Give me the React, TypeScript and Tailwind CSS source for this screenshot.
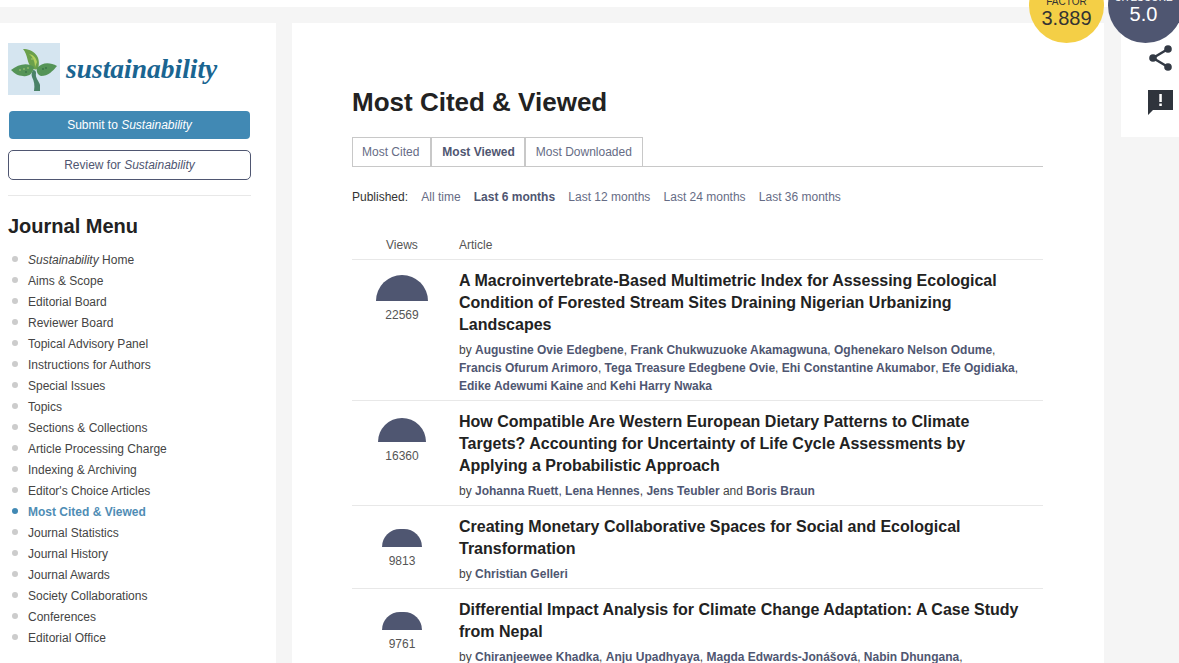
import React from 'react';

const font = "font-['Liberation_Sans',Arial,sans-serif]";

const menu = [
  'Aims & Scope',
  'Editorial Board',
  'Reviewer Board',
  'Topical Advisory Panel',
  'Instructions for Authors',
  'Special Issues',
  'Topics',
  'Sections & Collections',
  'Article Processing Charge',
  'Indexing & Archiving',
  "Editor's Choice Articles",
  'Most Cited & Viewed',
  'Journal Statistics',
  'Journal History',
  'Journal Awards',
  'Society Collaborations',
  'Conferences',
  'Editorial Office',
];

const articles = [
  {
    views: '22569',
    dome: 'w-[52px] h-[26px] mt-[15px]',
    row: 'h-[141px]',
    title: 'A Macroinvertebrate-Based Multimetric Index for Assessing Ecological Condition of Forested Stream Sites Draining Nigerian Urbanizing Landscapes',
    authors: ['Augustine Ovie Edegbene', 'Frank Chukwuzuoke Akamagwuna', 'Oghenekaro Nelson Odume', 'Francis Ofurum Arimoro', 'Tega Treasure Edegbene Ovie', 'Ehi Constantine Akumabor', 'Efe Ogidiaka', 'Edike Adewumi Kaine', 'Kehi Harry Nwaka'],
  },
  {
    views: '16360',
    dome: 'w-[48px] h-[24px] mt-[17px]',
    row: 'h-[105px]',
    title: 'How Compatible Are Western European Dietary Patterns to Climate Targets? Accounting for Uncertainty of Life Cycle Assessments by Applying a Probabilistic Approach',
    authors: ['Johanna Ruett', 'Lena Hennes', 'Jens Teubler', 'Boris Braun'],
  },
  {
    views: '9813',
    dome: 'w-[40px] h-[18px] mt-[23px]',
    row: 'h-[83px]',
    title: 'Creating Monetary Collaborative Spaces for Social and Ecological Transformation',
    authors: ['Christian Gelleri'],
  },
  {
    views: '9761',
    dome: 'w-[40px] h-[18px] mt-[23px]',
    row: 'h-[83px]',
    title: 'Differential Impact Analysis for Climate Change Adaptation: A Case Study from Nepal',
    authors: ['Chiranjeewee Khadka', 'Anju Upadhyaya', 'Magda Edwards-Jonášová', 'Nabin Dhungana'],
    more: true,
  },
];

function Logo() {
  return (
    <svg width="52" height="52" viewBox="0 0 52 52" className="shrink-0">
      <rect width="52" height="52" fill="#d5e5f0" />
      {/* stem */}
      <path d="M25 27 C27 27 28 28 28 30 C27 35 31 38 32 42 L32 48 L26 48 C27 42 26 38 24 34 C23 31 24 29 25 27Z" fill="#4a8268" />
      {/* leaves */}
      <path d="M15 6 C25 6 34 13 30 26 C27 27 24 26 23 24 C19 20 20 12 15 6Z" fill="#6ba04c" />
      <path d="M21 11 C25 14 27 19 27 24 L29 19 C28 15 26 12 21 11Z" fill="#b3cf5f" />
      <path d="M3 27 C10 21 20 19 26 24 C25 31 20 34 15 33 C10 33 6 30 3 27Z" fill="#559457" />
      <path d="M49 23 C42 19 34 19 29 25 C28 29 30 32 33 33 C40 33 45 28 49 23Z" fill="#559457" />
      <g fill="#c5dc7a">
        <circle cx="12" cy="27" r="0.7" />
        <circle cx="16" cy="26" r="0.7" />
        <circle cx="20" cy="25" r="0.7" />
        <circle cx="24" cy="16" r="0.7" />
      </g>
      <g fill="#22543a">
        <circle cx="35" cy="26" r="0.7" />
        <circle cx="38" cy="25" r="0.7" />
        <circle cx="18" cy="29" r="0.7" />
      </g>
    </svg>
  );
}

function Sidebar() {
  return (
    <aside className="w-[276px] shrink-0 bg-white pl-2 pt-5 h-[640px]">
      <div className="flex items-center">
        <Logo />
        <span className="ml-[6px] font-['Liberation_Serif',serif] text-[27.5px] font-bold italic leading-none text-[#1a6591]">sustainability</span>
      </div>
      <div className="ml-px mt-4 flex h-[28px] w-[241px] items-center justify-center rounded-[4px] bg-[#4189b4] text-xs text-white">
        Submit to&nbsp;<em>Sustainability</em>
      </div>
      <div className="mt-[11px] flex h-[30px] w-[243px] items-center justify-center rounded-[5px] border border-[#4f5671] text-xs text-[#4f5671]">
        Review for&nbsp;<em>Sustainability</em>
      </div>
      <div className="mt-[15px] h-px w-[243px] bg-[#e8e8e8]" />
      <h2 className="mt-[18px] text-xl leading-[24px] font-bold text-[#222]">Journal Menu</h2>
      <ul className="mt-[12px] text-xs text-[#444]">
        <li className="relative h-[21px] pl-5 leading-[21px]">
          <span className="absolute left-[4px] top-[6px] size-[6px] rounded-full bg-[#cccccc]" />
          <em>Sustainability</em> Home
        </li>
        {menu.map((item) => {
          const active = item === 'Most Cited & Viewed';
          return (
            <li key={item} className={`relative h-[21px] pl-5 leading-[21px] ${active ? 'font-bold text-[#4f8db5]' : ''}`}>
              <span className={`absolute left-[4px] top-[6px] size-[6px] rounded-full ${active ? 'bg-[#4189b4]' : 'bg-[#cccccc]'}`} />
              {item}
            </li>
          );
        })}
      </ul>
    </aside>
  );
}

function Row({ article, last }: { article: (typeof articles)[number]; last: boolean }) {
  return (
    <div className={`flex ${article.row} ${last ? '' : 'border-b border-[#e8e8e8]'}`}>
      <div className="flex w-[107px] shrink-0 flex-col items-center pr-[7px]">
        <div className={`${article.dome} rounded-t-full bg-[#4f5671]`} />
        <div className="mt-[7px] text-xs leading-[14px] text-[#555]">{article.views}</div>
      </div>
      <div className="min-w-0 flex-1 pt-[10px] pr-[10px]">
        <div className="text-base leading-[22px] font-bold text-[#222]">{article.title}</div>
        <div className="mt-[5px] text-xs leading-[18px] text-[#444]">
          by{' '}
          {article.authors.map((a, i) => (
            <span key={a}>
              <b className="text-[#4f5671]">{a}</b>
              {article.more
                ? i < article.authors.length - 1 ? ', ' : ','
                : i < article.authors.length - 2 ? ', ' : i === article.authors.length - 2 ? ' and ' : ''}
            </span>
          ))}
        </div>
      </div>
    </div>
  );
}

function Main() {
  return (
    <main className="relative ml-4 h-[640px] w-[812px] shrink-0 overflow-hidden bg-white pl-[60px] pt-[62px]">
      <h1 className="text-[26px] leading-[34px] font-bold text-[#222]">Most Cited &amp; Viewed</h1>
      <div className="mt-[18px] mr-[61px] flex h-[30px] border-b border-[#c8c8c8] text-xs text-[#666c85]">
        <div className="flex h-[29px] items-center border border-b-0 border-[#c8c8c8] pl-[9px] pr-[11px]">Most Cited</div>
        <div className="flex h-[29px] items-center border border-b-0 border-[#c8c8c8] pl-[10px] pr-[9px] font-bold text-[#4f5671]">Most Viewed</div>
        <div className="flex h-[29px] items-center border border-b-0 border-[#c8c8c8] px-[10px]">Most Downloaded</div>
      </div>
      <div className="mt-[22px] flex gap-[13.2px] text-xs leading-[16px] text-[#666c85]">
        <span className="text-[#333]">Published:</span>
        <span>All time</span>
        <b className="text-[#4f5671]">Last 6 months</b>
        <span>Last 12 months</span>
        <span>Last 24 months</span>
        <span>Last 36 months</span>
      </div>
      <div className="mt-[32px] mr-[61px]">
        <div className="flex h-[23px] items-start border-b border-[#e8e8e8] text-xs leading-[16px] text-[#555]">
          <div className="w-[107px] pl-[34px]">Views</div>
          <div>Article</div>
        </div>
        {articles.map((a, i) => (
          <Row key={a.views} article={a} last={i === articles.length - 1} />
        ))}
      </div>
    </main>
  );
}

function RightPanel() {
  return (
    <div className="ml-[17px] flex h-[114px] flex-1 flex-col items-start bg-white pl-[27px] pt-[21px]">
      <svg width="28" height="28" viewBox="0 0 28 28" fill="#333a45" stroke="#333a45">
        <path d="M20 5 L5 14 L20 23" fill="none" strokeWidth="2.5" />
        <circle cx="20" cy="5" r="3.8" stroke="none" />
        <circle cx="5" cy="14" r="3.8" stroke="none" />
        <circle cx="20" cy="23" r="3.8" stroke="none" />
      </svg>
      <svg width="26" height="26" viewBox="0 0 26 26" className="mt-[18px]">
        <path d="M0 0H25V20H5L0 25Z" fill="#2f343c" />
        <rect x="11.3" y="4" width="2.5" height="8" fill="#fff" />
        <rect x="11.3" y="13.5" width="2.5" height="2.5" fill="#fff" />
      </svg>
    </div>
  );
}

export default function App() {
  return (
    <div className={`relative h-[663px] w-[1179px] overflow-hidden bg-white pt-[7px] ${font}`}>
      <div className="flex h-[656px] bg-[#f5f5f5] pt-4">
        <Sidebar />
        <Main />
        <RightPanel />
      </div>
      <div className="absolute left-[1029px] top-[-32px] flex size-[75px] flex-col items-center justify-end rounded-full bg-[#f4cf46] pb-[15px] text-[#333]">
        <span className="text-[10px] leading-[12px]">FACTOR</span>
        <span className="text-[20px] leading-[20px]">3.889</span>
      </div>
      <div className="absolute left-[1108px] top-[-32px] flex size-[75px] flex-col items-center justify-end rounded-full bg-[#4f5671] pb-[19px] pr-[4px] text-white">
        <span className="text-[10px] leading-[12px]">CITESCORE</span>
        <span className="text-[20px] leading-[20px]">5.0</span>
      </div>
    </div>
  );
}
